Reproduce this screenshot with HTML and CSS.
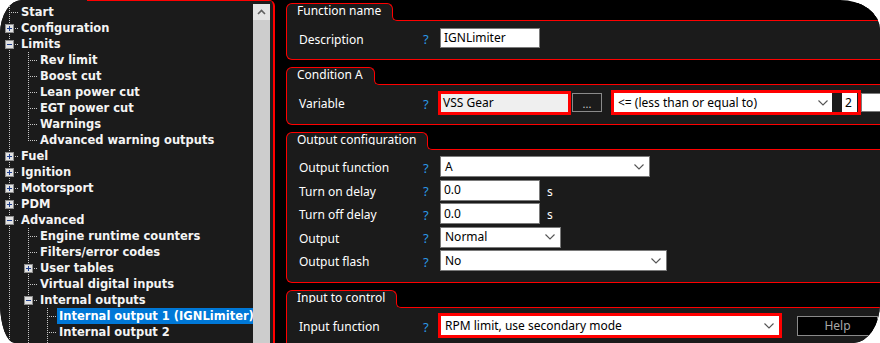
FILE: index.html
```html
<!DOCTYPE html>
<html>
<head>
<meta charset="utf-8">
<link rel="stylesheet" href="styles.css">
</head>
<body>
<div class="screen">
  <aside class="tree-panel">
    <div class="tree">
      <div class="node"><span class="c"></span><span class="t">Start</span></div>
      <div class="node"><span class="c"><svg class="exp" width="9" height="9"><rect x=".5" y=".5" width="8" height="8"/><path d="M2 4.5h5M4.5 2v5"/></svg></span><span class="t">Configuration</span></div>
      <div class="node"><span class="c"><svg class="exp" width="9" height="9"><rect x=".5" y=".5" width="8" height="8"/><path d="M2 4.5h5"/></svg></span><span class="t">Limits</span></div>
      <div class="node"><span class="g"></span><span class="c"></span><span class="t">Rev limit</span></div>
      <div class="node"><span class="g"></span><span class="c"></span><span class="t">Boost cut</span></div>
      <div class="node"><span class="g"></span><span class="c"></span><span class="t">Lean power cut</span></div>
      <div class="node"><span class="g"></span><span class="c"></span><span class="t">EGT power cut</span></div>
      <div class="node"><span class="g"></span><span class="c"></span><span class="t">Warnings</span></div>
      <div class="node"><span class="g"></span><span class="c last"></span><span class="t">Advanced warning outputs</span></div>
      <div class="node"><span class="c"><svg class="exp" width="9" height="9"><rect x=".5" y=".5" width="8" height="8"/><path d="M2 4.5h5M4.5 2v5"/></svg></span><span class="t">Fuel</span></div>
      <div class="node"><span class="c"><svg class="exp" width="9" height="9"><rect x=".5" y=".5" width="8" height="8"/><path d="M2 4.5h5M4.5 2v5"/></svg></span><span class="t">Ignition</span></div>
      <div class="node"><span class="c"><svg class="exp" width="9" height="9"><rect x=".5" y=".5" width="8" height="8"/><path d="M2 4.5h5M4.5 2v5"/></svg></span><span class="t">Motorsport</span></div>
      <div class="node"><span class="c"><svg class="exp" width="9" height="9"><rect x=".5" y=".5" width="8" height="8"/><path d="M2 4.5h5M4.5 2v5"/></svg></span><span class="t">PDM</span></div>
      <div class="node"><span class="c"><svg class="exp" width="9" height="9"><rect x=".5" y=".5" width="8" height="8"/><path d="M2 4.5h5"/></svg></span><span class="t">Advanced</span></div>
      <div class="node"><span class="g"></span><span class="c"></span><span class="t">Engine runtime counters</span></div>
      <div class="node"><span class="g"></span><span class="c"></span><span class="t">Filters/error codes</span></div>
      <div class="node"><span class="g"></span><span class="c"><svg class="exp" width="9" height="9"><rect x=".5" y=".5" width="8" height="8"/><path d="M2 4.5h5M4.5 2v5"/></svg></span><span class="t">User tables</span></div>
      <div class="node"><span class="g"></span><span class="c"></span><span class="t">Virtual digital inputs</span></div>
      <div class="node"><span class="g"></span><span class="c"><svg class="exp" width="9" height="9"><rect x=".5" y=".5" width="8" height="8"/><path d="M2 4.5h5"/></svg></span><span class="t">Internal outputs</span></div>
      <div class="node"><span class="g"></span><span class="g"></span><span class="c"></span><span class="t selected">Internal output 1 (IGNLimiter)</span></div>
      <div class="node"><span class="g"></span><span class="g"></span><span class="c"></span><span class="t">Internal output 2</span></div>
      <div class="node"><span class="g"></span><span class="g"></span><span class="g"></span></div>
    </div>
    <div class="vscroll">
      <div class="vscroll-up"><svg width="9" height="6"><polyline points="1,5 4.5,1.5 8,5" fill="none" stroke="#606060" stroke-width="1.6"/></svg></div>
      <div class="vscroll-thumb"></div>
    </div>
  </aside>

  <main class="forms">
    <section class="group">
      <div class="group-head">
        <div class="tab-col"><div class="tab">Function name</div><div class="tab-foot"></div></div>
        <div class="ledge"><div class="ledge-top"></div><div class="ledge-bot"></div></div>
      </div>
      <div class="group-body g1">
        <div class="row">
          <span class="lbl">Description</span><span class="help">?</span>
          <div class="field w100">IGNLimiter</div>
        </div>
      </div>
    </section>

    <section class="group">
      <div class="group-head">
        <div class="tab-col"><div class="tab">Condition A</div><div class="tab-foot"></div></div>
        <div class="ledge"><div class="ledge-top"></div><div class="ledge-bot"></div></div>
      </div>
      <div class="group-body g2">
        <div class="row row-tall">
          <span class="lbl">Variable</span><span class="help">?</span>
          <div class="redbox vss">VSS Gear</div>
          <div class="btn-dots">...</div>
          <div class="redbox combo">
            <div class="cmb-sel"><span>&lt;= (less than or equal to)</span><svg class="chev" width="10" height="6"><polyline points="0.5,0.5 5,5 9.5,0.5"/></svg></div>
            <div class="cmb-val">2</div>
          </div>
          <div class="field trail"></div>
        </div>
      </div>
    </section>

    <section class="group">
      <div class="group-head">
        <div class="tab-col"><div class="tab">Output configuration</div><div class="tab-foot"></div></div>
        <div class="ledge"><div class="ledge-top"></div><div class="ledge-bot"></div></div>
      </div>
      <div class="group-body g3">
        <div class="rows">
          <div class="row r21">
            <span class="lbl">Output function</span><span class="help">?</span>
            <div class="field sel w210"><span>A</span><svg class="chev" width="10" height="6"><polyline points="0.5,0.5 5,5 9.5,0.5"/></svg></div>
          </div>
          <div class="row r21">
            <span class="lbl">Turn on delay</span><span class="help">?</span>
            <div class="field w100">0.0</div><span class="unit">s</span>
          </div>
          <div class="row r21">
            <span class="lbl">Turn off delay</span><span class="help">?</span>
            <div class="field w100">0.0</div><span class="unit">s</span>
          </div>
          <div class="row r21">
            <span class="lbl">Output</span><span class="help">?</span>
            <div class="field sel w121"><span>Normal</span><svg class="chev" width="10" height="6"><polyline points="0.5,0.5 5,5 9.5,0.5"/></svg></div>
          </div>
          <div class="row r21">
            <span class="lbl">Output flash</span><span class="help">?</span>
            <div class="field sel w227"><span>No</span><svg class="chev" width="10" height="6"><polyline points="0.5,0.5 5,5 9.5,0.5"/></svg></div>
          </div>
        </div>
      </div>
    </section>

    <section class="group">
      <div class="group-head">
        <div class="tab-col"><div class="tab">Input to control</div><div class="tab-foot"></div></div>
        <div class="ledge"><div class="ledge-top"></div><div class="ledge-bot"></div></div>
      </div>
      <div class="group-body g4">
        <div class="row row-tall">
          <span class="lbl">Input function</span><span class="help">?</span>
          <div class="redbox infn"><span>RPM limit, use secondary mode</span><svg class="chev" width="10" height="6"><polyline points="0.5,0.5 5,5 9.5,0.5"/></svg></div>
          <div class="btn-help">Help</div>
        </div>
      </div>
    </section>
  </main>
</div>
</body>
</html>
```

FILE: styles.css
```css
* { box-sizing: border-box; }

html, body {
  margin: 0;
  padding: 0;
  background: #fff;
}

.screen {
  width: 880px;
  height: 343px;
  overflow: hidden;
  display: flex;
  background: #000;
  border-radius: 22px 40px 27px 15px / 34px 30px 40px 40px;
}

/* ---------- tree panel ---------- */
.tree-panel {
  flex: none;
  width: 275px;
  height: 343px;
  display: flex;
  padding-right: 3px;
  background: linear-gradient(#f00, #f00) 87px 0 / 100% 1px no-repeat border-box, #1b1b1b;
  border-right: 2px solid #f00;
  border-top-right-radius: 6px;
}

.tree {
  flex: none;
  width: 253px;
  overflow: hidden;
  padding-top: 4px;
  font: bold 11.5px/16px "DejaVu Sans", Verdana, sans-serif;
  color: #f4f4f4;
  white-space: nowrap;
}

.node {
  display: flex;
  height: 16px;
  align-items: center;
}

.g,
.c {
  flex: none;
  width: 19px;
  height: 16px;
}

.g {
  background: repeating-linear-gradient(to bottom, #c8c8c8 0 1px, transparent 1px 2px) 9px 0 / 1px 16px no-repeat;
}

.c {
  display: flex;
  align-items: center;
  background:
    repeating-linear-gradient(to right, #c8c8c8 0 1px, transparent 1px 2px) 11px 8px / 8px 1px no-repeat,
    repeating-linear-gradient(to bottom, #c8c8c8 0 1px, transparent 1px 2px) 9px 0 / 1px 16px no-repeat;
}

.c.last {
  background:
    repeating-linear-gradient(to right, #c8c8c8 0 1px, transparent 1px 2px) 11px 8px / 8px 1px no-repeat,
    repeating-linear-gradient(to bottom, #c8c8c8 0 1px, transparent 1px 2px) 9px 0 / 1px 9px no-repeat;
}

.exp {
  margin-left: 5px;
  display: block;
}

.exp rect {
  fill: #e2e2e2;
  stroke: #8e8e8e;
}

.exp path {
  stroke: #20408f;
  stroke-width: 1;
}

.t {
  margin-left: 2px;
}

.t.selected {
  margin-left: 0;
  padding: 0 2px;
  background: #0078d7;
  color: #fff;
}

.vscroll {
  flex: none;
  width: 17px;
  margin-top: 4px;
  display: flex;
  flex-direction: column;
  background: #cdcdcd;
}

.vscroll-up {
  height: 16px;
  background: #e4e4e4;
  display: flex;
  align-items: center;
  justify-content: center;
}

.vscroll-up svg { display: block; }

/* ---------- forms ---------- */
.forms {
  flex: none;
  width: 640px;
  margin-left: 11px;
  padding-top: 3px;
  display: flex;
  flex-direction: column;
  gap: 7px;
  font: 12px/16px "Noto Sans", "Open Sans", sans-serif;
  color: #fff;
}

.group-head {
  display: flex;
  height: 18px;
  background: #000;
}

.tab-col {
  display: flex;
  flex-direction: column;
}

.tab {
  height: 13px;
  padding: 0 11px 0 10px;
  line-height: 14px;
  white-space: nowrap;
  background: #1b1b1b;
  border: 1px solid #f00;
  border-bottom: 0;
  border-radius: 6px 6px 0 0;
}

.tab-foot {
  flex: 1;
  background: #1b1b1b;
  border-left: 1px solid #f00;
}

.ledge {
  flex: 1;
  display: flex;
  flex-direction: column;
  background: #1b1b1b;
}

.ledge-top {
  flex: 1;
  background: #000;
}

.ledge-bot {
  height: 5px;
  margin-left: -1px;
  background: #000;
  border-left: 1px solid #f00;
  border-bottom: 1px solid #f00;
  border-bottom-left-radius: 5px;
}

.group-body {
  background: #1b1b1b;
  border: 1px solid #f00;
  border-top: 0;
  border-bottom-left-radius: 6px;
  padding-left: 12px;
}

.g1 { padding-top: 7px; padding-bottom: 11px; }
.g2 { padding-top: 5px; padding-bottom: 9px; }
.g3 { padding-top: 6px; padding-bottom: 11px; }
.g4 { padding-top: 5px; padding-bottom: 10px; }

.rows {
  display: flex;
  flex-direction: column;
  gap: 2.5px;
}

.row {
  display: flex;
  align-items: center;
  height: 20px;
  white-space: nowrap;
}

.row.r21 { height: 21px; }
.row.row-tall { height: 25px; }

.lbl {
  flex: none;
  width: 124px;
  padding-top: 3px;
}

.help {
  flex: none;
  width: 17px;
  padding-top: 2px;
  color: #2c98e6;
  font-size: 13px;
}

.field {
  flex: none;
  height: 100%;
  display: flex;
  align-items: center;
  justify-content: space-between;
  padding-left: 3px;
  background: #fff;
  border: 1px solid #7a7a7a;
  color: #000;
}

.field.sel {
  padding-left: 4px;
  padding-right: 5px;
}

.w100 { width: 100px; }
.w121 { width: 121px; }
.w210 { width: 210px; }
.w227 { width: 227px; }

.chev {
  display: block;
  flex: none;
}

.chev polyline {
  fill: none;
  stroke: #555;
  stroke-width: 1.1;
}

.unit {
  margin-left: 7px;
  padding-top: 3px;
}

.redbox {
  flex: none;
  border: 3px solid #f00;
  color: #000;
}

.vss {
  width: 133px;
  height: 24px;
  margin-left: -2px;
  align-self: flex-end;
  padding-left: 2px;
  background: #efefef;
  line-height: 17px;
}

.btn-dots {
  flex: none;
  width: 30px;
  height: 19px;
  margin-left: 1px;
  display: flex;
  align-items: flex-end;
  justify-content: center;
  background: #1b1b1b;
  border: 1px solid #8a8a8a;
  color: #c8c8c8;
  font-size: 11px;
  line-height: 15px;
}

.combo {
  width: 250px;
  height: 25px;
  margin-left: 9px;
  display: flex;
  gap: 10px;
  background: #1b1b1b;
}

.cmb-sel {
  width: 218px;
  display: flex;
  align-items: center;
  justify-content: space-between;
  padding: 0 4px 0 4px;
  background: #fff;
}

.cmb-val {
  width: 15px;
  padding-left: 3px;
  background: #fff;
  line-height: 19px;
}

.field.trail {
  width: 60px;
  height: 19px;
}

.infn {
  width: 344px;
  height: 25px;
  margin-left: -2px;
  display: flex;
  align-items: center;
  justify-content: space-between;
  padding: 0 5px 0 4px;
  background: #fff;
}

.btn-help {
  flex: none;
  width: 81px;
  height: 20px;
  margin-left: 15px;
  background: #000;
  border: 1px solid #8a8a8a;
  color: #a8a8a8;
  text-align: center;
  line-height: 17px;
  overflow: hidden;
}
```
